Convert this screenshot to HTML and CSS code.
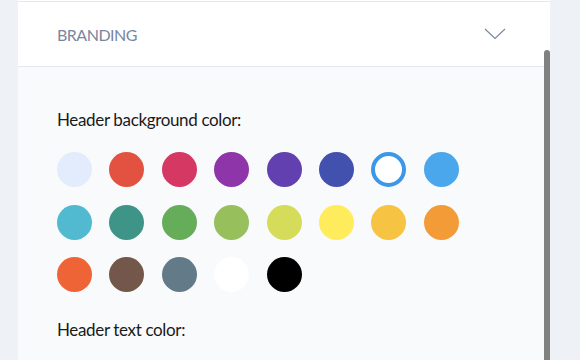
FILE: index.html
```html
<!DOCTYPE html>
<html>
<head>
<meta charset="utf-8">
<link rel="stylesheet" href="styles.css">
</head>
<body>
<div class="panel">
  <div class="prev"></div>
  <div class="section-head">
    <span class="section-title">BRANDING</span>
    <svg class="chevron" width="22" height="12" viewBox="0 0 22 12"><path d="M1 1 L11 10.5 L21 1" fill="none" stroke="#7a86a0" stroke-width="1.2"/></svg>
  </div>
  <div class="section-body">
    <div class="label">Header background color:</div>
    <div class="swatches">
      <span class="sw" style="background:#e3ecfc"></span>
      <span class="sw" style="background:#e35241"></span>
      <span class="sw" style="background:#d63864"></span>
      <span class="sw" style="background:#8e35a9"></span>
      <span class="sw" style="background:#6240b0"></span>
      <span class="sw" style="background:#4250ae"></span>
      <span class="sw selected"></span>
      <span class="sw" style="background:#4aa7ec"></span>
      <span class="sw" style="background:#51b9d0"></span>
      <span class="sw" style="background:#3e9486"></span>
      <span class="sw" style="background:#66ad5a"></span>
      <span class="sw" style="background:#97c05c"></span>
      <span class="sw" style="background:#d4dc5a"></span>
      <span class="sw" style="background:#ffec5c"></span>
      <span class="sw" style="background:#f6c343"></span>
      <span class="sw" style="background:#f39c37"></span>
      <span class="sw" style="background:#ef6436"></span>
      <span class="sw" style="background:#72574a"></span>
      <span class="sw" style="background:#637b88"></span>
      <span class="sw" style="background:#ffffff"></span>
      <span class="sw" style="background:#000000"></span>
    </div>
    <div class="label second">Header text color:</div>
  </div>
  <div class="scrollbar"></div>
</div>
</body>
</html>
```
FILE: styles.css
```css
html, body {
  margin: 0;
  padding: 0;
  height: 100%;
  overflow: hidden;
}
body {
  background: #eef2f6;
  font-family: Lato, "Liberation Sans", sans-serif;
}
.panel {
  position: relative;
  margin-left: 18px;
  width: 532px;
  height: 360px;
  background: #f9fafc;
  overflow: hidden;
}
.prev {
  height: 1px;
  background: #fff;
  border-bottom: 1px solid #e4e8ee;
}
.section-head {
  height: 64px;
  background: #fff;
  border-bottom: 1px solid #e4e8ee;
  display: flex;
  align-items: center;
  justify-content: space-between;
  padding: 0 44px 0 39px;
}
.section-title {
  font-size: 16px;
  color: #7a86a0;
  letter-spacing: -0.5px;
}
.chevron {
  display: block;
}
.section-body {
  padding: 41px 39px 0;
}
.label {
  font-size: 17px;
  line-height: 24px;
  color: #1a1a1a;
  letter-spacing: -0.35px;
}
.swatches {
  display: grid;
  grid-template-columns: repeat(8, 35px);
  column-gap: 17.4px;
  row-gap: 17.5px;
  margin-top: 20px;
}
.sw {
  display: block;
  width: 35px;
  height: 35px;
  border-radius: 50%;
  box-sizing: border-box;
}
.sw.selected {
  background: #fff;
  border: 4px solid #3d97e8;
}
.label.second {
  margin-top: 26px;
}
.scrollbar {
  position: absolute;
  right: 0;
  top: 50px;
  width: 6px;
  bottom: -10px;
  background: #808080;
  border-radius: 3px;
}
```
